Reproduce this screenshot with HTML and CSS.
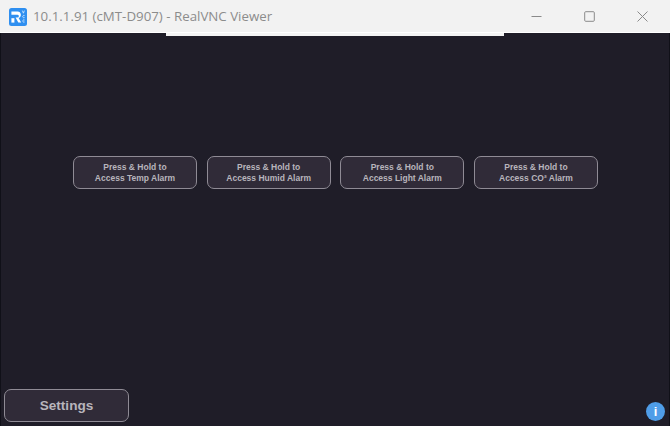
FILE: index.html
```html
<!DOCTYPE html>
<html lang="en">
<head>
<meta charset="utf-8">
<title>10.1.1.91 (cMT-D907) - RealVNC Viewer</title>
<link rel="stylesheet" href="styles.css">
</head>
<body>
<div class="window">
  <header class="titlebar">
    <svg class="app-icon" viewBox="0 0 18 18" aria-hidden="true">
      <rect width="18" height="18" rx="2.5" fill="#2f8ff0"/>
      <path d="M2.4 3.4h6.2a3.4 3.4 0 0 1 1 6.6l2.6 4.6H9.3L6.6 9.6h1.8a1.4 1.4 0 0 0 0-2.9H2.4z" fill="#fff"/>
      <path d="M2.4 10.2h3v4.4h-3z" fill="#fff"/>
      <path d="M13.4 2.6l1 2.6 1-2.6M15.6 7.6a1.2 1.2 0 1 0 0 2M15.6 12a1.2 1.2 0 1 0 0 2" fill="none" stroke="#dbeeff" stroke-width=".8"/>
    </svg>
    <span class="title">10.1.1.91 (cMT-D907) - RealVNC Viewer</span>
    <div class="controls">
      <svg class="ctl" viewBox="0 0 11 11" aria-hidden="true"><path d="M.5 5.5h10"/></svg>
      <svg class="ctl" viewBox="0 0 11 11" aria-hidden="true"><rect x=".7" y=".7" width="9.6" height="9.6" rx="1"/></svg>
      <svg class="ctl" viewBox="0 0 11 11" aria-hidden="true"><path d="M.5.5l10 10M10.5.5l-10 10"/></svg>
    </div>
  </header>
  <main class="screen">
    <div class="strip"></div>
    <div class="alarms">
      <button class="alarm">Press &amp; Hold to<br>Access Temp Alarm</button>
      <button class="alarm">Press &amp; Hold to<br>Access Humid Alarm</button>
      <button class="alarm">Press &amp; Hold to<br>Access Light Alarm</button>
      <button class="alarm">Press &amp; Hold to<br>Access CO² Alarm</button>
    </div>
    <div class="footer">
      <button class="settings">Settings</button>
      <div class="info">i</div>
    </div>
  </main>
</div>
</body>
</html>
```
FILE: styles.css
```css
html, body {
  margin: 0;
  padding: 0;
  height: 100%;
}
body {
  background: #1f1d28;
  overflow: hidden;
}
.window {
  width: 670px;
  height: 426px;
  display: flex;
  flex-direction: column;
}
.titlebar {
  height: 33px;
  flex: none;
  box-sizing: border-box;
  background: #f2f2f2;
  border-bottom: 1px solid #fff;
  display: flex;
  align-items: center;
  padding-left: 9px;
}
.app-icon {
  width: 18px;
  height: 18px;
  flex: none;
  margin-top: 2px;
}
.title {
  margin-left: 6px;
  font: 13.3px "Open Sans", "Noto Sans", sans-serif;
  color: #8c8c8c;
  white-space: nowrap;
}
.controls {
  margin-left: auto;
  display: flex;
  gap: 42px;
  padding-right: 22px;
  align-items: center;
}
.ctl {
  width: 11px;
  height: 11px;
  fill: none;
  stroke: #8a8a8a;
  stroke-width: 1;
}
.screen {
  flex: 1;
  min-height: 0;
  display: flex;
  flex-direction: column;
  background: #1f1d28;
  border-left: 1px solid #101018;
  border-right: 1px solid #101018;
}
.strip {
  height: 3px;
  width: 338px;
  margin-left: 165px;
  background: #f4f4f4;
  flex: none;
}
.alarms {
  margin-top: 120px;
  padding-left: 72px;
  display: flex;
  gap: 9.67px;
}
.alarm {
  width: 124px;
  height: 33px;
  padding: 0;
  box-sizing: border-box;
  background: #302b38;
  border: 1px solid #8f8b95;
  border-radius: 7px;
  color: #b8b5bc;
  font: bold 8.5px/10.5px "Liberation Sans", Arial, sans-serif;
  text-align: center;
}
.footer {
  margin-top: auto;
  padding: 0 4px 4px 3px;
  display: flex;
  align-items: flex-end;
  justify-content: space-between;
}
.settings {
  width: 125px;
  height: 33px;
  padding: 0;
  box-sizing: border-box;
  background: #302b38;
  border: 1px solid #8f8b95;
  border-radius: 7px;
  color: #b8b5bc;
  font: bold 13.6px "Liberation Sans", Arial, sans-serif;
}
.info {
  width: 19px;
  height: 19px;
  margin-bottom: 1px;
  border-radius: 50%;
  background: #4f9de8;
  color: #fff;
  font: bold 13px/19px "Liberation Sans", Arial, sans-serif;
  text-align: center;
}
```
